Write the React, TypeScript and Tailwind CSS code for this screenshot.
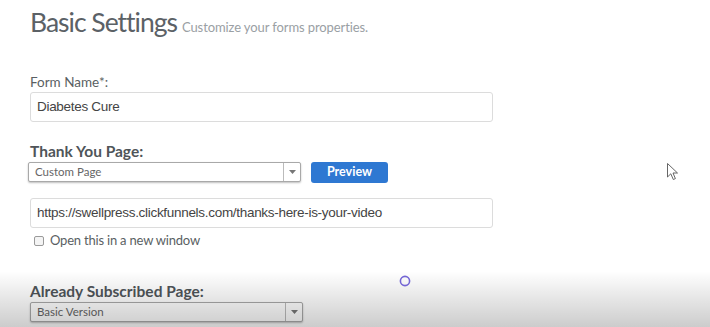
import React from "react";

const lato = { fontFamily: "Lato, 'Noto Sans', sans-serif" };
const arial = { fontFamily: "'Liberation Sans', Arial, sans-serif" };

function SelectBox({ value, className = "" }: { value: string; className?: string }) {
  return (
    <div
      className={`flex h-[20px] w-[273px] items-stretch rounded-[2px] border border-[#a9a9a9] bg-white shadow-[0_1px_2px_rgba(0,0,0,0.25)] ${className}`}
    >
      <div className="flex flex-1 items-center pl-[6px] text-[11.5px] text-[#666]">{value}</div>
      <div className="flex w-[17px] items-center justify-center border-l border-[#bbb]">
        <svg width="7" height="4" viewBox="0 0 7 4">
          <path d="M0 0 L7 0 L3.5 4 Z" fill="#777" />
        </svg>
      </div>
    </div>
  );
}

export default function App() {
  return (
    <div className="relative h-[327px] w-[710px] overflow-hidden bg-white" style={lato}>
      <div className="pl-[30px] pt-[4px]">
        <div className="flex h-[36px] items-baseline gap-[5px]">
          <h1 className="text-[26.5px] leading-[36px] tracking-[-1px] text-[#5b6166]">Basic Settings</h1>
          <span className="text-[13px] tracking-[-0.1px] text-[#9aa0a4]">Customize your forms properties.</span>
        </div>

        <label className="mt-[33px] block text-[13.5px] leading-[19px] text-[#5a5f63]">Form Name*:</label>
        <div className="flex h-[30px] w-[463px] items-center rounded-[3px] border border-[#dcdcdc] px-[6px]">
          <span className="text-[13.5px] tracking-[-0.3px] text-[#444]" style={arial}>
            Diabetes Cure
          </span>
        </div>

        <h2 className="mt-[19px] text-[15.5px] font-bold leading-[20px] text-[#4f5559]">Thank You Page:</h2>
        <div className="mt-[1px] flex items-start gap-[10px]">
          <SelectBox value="Custom Page" className="-ml-[2px]" />
          <button className="h-[21px] w-[77px] rounded-[3px] bg-[#2e78d2] text-[12.5px] font-bold text-white">
            Preview
          </button>
        </div>

        <div className="mt-[15px] flex h-[30px] w-[463px] items-center rounded-[3px] border border-[#dcdcdc] px-[6px]">
          <span className="text-[13.5px] tracking-[-0.3px] text-[#444]" style={arial}>
            https://swellpress.clickfunnels.com/thanks-here-is-your-video
          </span>
        </div>

        <div className="mt-[3px] flex h-[18px] items-center gap-[6px] pl-[4px]">
          <span className="mt-[2px] block h-[10px] w-[10px] rounded-[2px] border border-[#9a9a9a] bg-[#f4f4f4]" />
          <span className="text-[13px] leading-[18px] tracking-[-0.2px] text-[#5a5f63]">Open this in a new window</span>
        </div>

        <h2 className="mt-[32px] text-[15.5px] font-bold leading-[20px] text-[#4f5559]">Already Subscribed Page:</h2>
        <SelectBox value="Basic Version" className="mt-[1px]" />
      </div>

      <div className="pointer-events-none absolute inset-x-0 bottom-0 h-[56px] bg-linear-to-b from-transparent to-[rgba(0,0,0,0.2)]" />

      <svg className="absolute left-[399px] top-[275px]" width="12" height="12" viewBox="0 0 12 12">
        <circle cx="6" cy="6" r="4.6" fill="none" stroke="#7466d4" strokeWidth="1.6" />
      </svg>

      <svg className="absolute left-[667px] top-[163px]" width="12" height="18" viewBox="0 0 12 18">
        <path d="M0.5 0.5 L0.5 14 L3.8 10.8 L6.3 16.5 L8.4 15.6 L6 10 L10.5 10 Z" fill="#fff" stroke="#555" strokeWidth="0.9" strokeLinejoin="round" />
      </svg>
    </div>
  );
}
